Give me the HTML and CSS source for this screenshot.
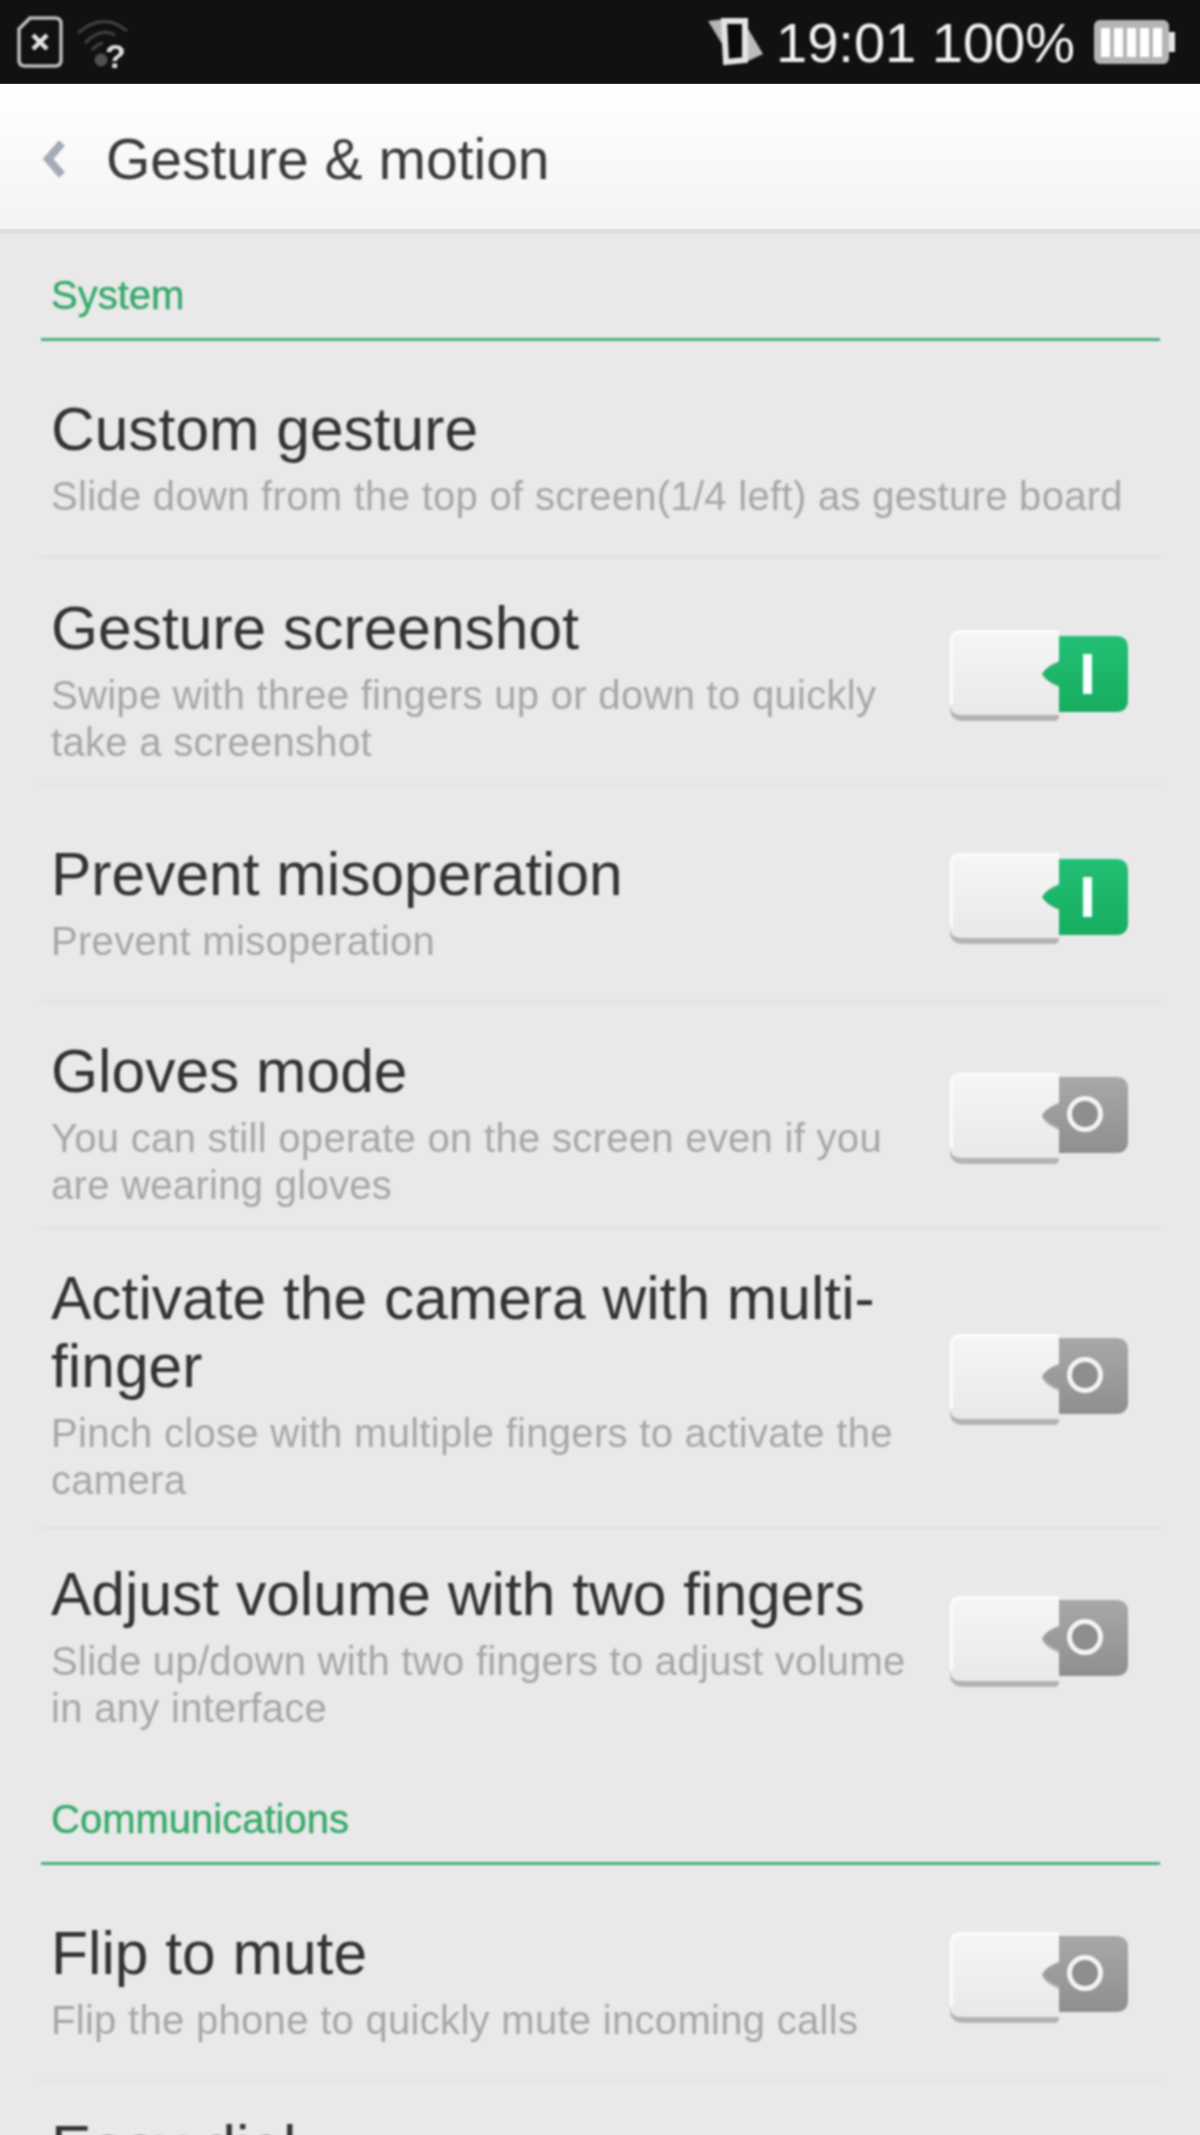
FILE: index.html
```html
<!DOCTYPE html>
<html lang="en">
<head>
<meta charset="utf-8">
<title>Gesture &amp; motion</title>
<link rel="stylesheet" href="styles.css">
</head>
<body>
<svg class="defs" width="0" height="0" aria-hidden="true">
  <defs>
    <linearGradient id="knob" x1="0" y1="0" x2="0" y2="1"><stop offset="0" stop-color="#f6f6f6"/><stop offset="1" stop-color="#e9e9e9"/></linearGradient>
    <linearGradient id="green" x1="0" y1="0" x2="0" y2="1"><stop offset="0" stop-color="#22c074"/><stop offset="1" stop-color="#17ad60"/></linearGradient>
    <linearGradient id="grey" x1="0" y1="0" x2="0" y2="1"><stop offset="0" stop-color="#a8a8a8"/><stop offset="1" stop-color="#8f8f8f"/></linearGradient>
    <symbol id="knob-shape" viewBox="0 0 180 94">
      <path d="M14 3H109V86Q109 91 104 91H14Q0 91 0 78V16Q0 3 14 3Z" fill="#b4b4b4"/>
      <path d="M12 0H109V31Q96 36 92 44Q96 52 109 57V85H12Q0 85 0 74V11Q0 0 12 0Z" fill="url(#knob)"/>
      <path d="M12 0H109V3H12Q4 3 3 11V74H0V11Q0 0 12 0Z" fill="#fbfbfb"/>
    </symbol>
    <symbol id="toggle-on" viewBox="0 0 180 94">
      <use href="#knob-shape" width="180" height="94"/>
      <path d="M109 6H166Q178 6 178 18V70Q178 82 166 82H109V56Q97 52 92 44Q97 36 109 32Z" fill="url(#green)"/>
      <rect x="133" y="24" width="9" height="40" fill="#f6fff9"/>
    </symbol>
    <symbol id="toggle-off" viewBox="0 0 180 94">
      <use href="#knob-shape" width="180" height="94"/>
      <path d="M109 4H166Q178 4 178 16V68Q178 80 166 80H109V54Q97 50 92 42Q97 34 109 30Z" fill="url(#grey)"/>
      <circle cx="135" cy="41" r="15.500" fill="#8e8e8e" stroke="#f4f4f4" stroke-width="5"/>
    </symbol>
  </defs>
</svg>
<div class="screen">
  <header class="status">
    <div class="status-group">
      <svg class="ic-sim" viewBox="0 0 46 52" aria-hidden="true">
        <path d="M13 2H38Q44 2 44 8V44Q44 50 38 50H8Q2 50 2 44V13Z" fill="none" stroke="#bdbdbd" stroke-width="3.500"/>
        <path d="M16 19L30 33M30 19L16 33" stroke="#e6e6e6" stroke-width="4.500"/>
      </svg>
      <svg class="ic-wifi" viewBox="0 0 52 50" aria-hidden="true">
        <path d="M1 14Q26 -8 50 12" fill="none" stroke="#3d3d3d" stroke-width="3.500"/>
        <path d="M8 24Q24 8 38 16" fill="none" stroke="#3d3d3d" stroke-width="3.500"/>
        <path d="M15 31Q20 25 26 24" fill="none" stroke="#3d3d3d" stroke-width="3.500"/>
        <circle cx="24" cy="41" r="6.500" fill="#4f4f4f"/>
        <text class="ic-wifi-q" x="28" y="49">?</text>
      </svg>
    </div>
    <div class="status-group">
      <svg class="ic-rotate" viewBox="0 0 57 50" aria-hidden="true">
        <path d="M0 5L17 3L19 36Z" fill="#b5b5b5"/>
        <path d="M36 6L55 38L38 46Z" fill="#bbbbbb"/>
        <path d="M16 5H37V44L18 46Z" fill="#0a0a0a" stroke="#e4e4e4" stroke-width="6"/>
      </svg>
      <span class="status-text">19:01 100%</span>
      <svg class="ic-battery" viewBox="0 0 82 46" aria-hidden="true">
        <rect x="1" y="1" width="75" height="44" rx="6" fill="#b5b5b5"/>
        <rect x="8" y="9" width="9" height="29" fill="#fff"/>
        <rect x="21" y="9" width="9" height="29" fill="#fff"/>
        <rect x="34" y="9" width="9" height="29" fill="#fff"/>
        <rect x="47" y="9" width="9" height="29" fill="#fff"/>
        <rect x="60" y="9" width="9" height="29" fill="#fff"/>
        <rect x="76" y="13" width="6" height="20" fill="#e6e6e6"/>
      </svg>
    </div>
  </header>

  <div class="titlebar">
    <svg class="ic-back" viewBox="0 0 26 40" aria-hidden="true">
      <path d="M21 4L7 20L21 36" fill="none" stroke="#a4abb5" stroke-width="8"/>
    </svg>
    <h1 class="title">Gesture &amp; motion</h1>
  </div>

  <main class="content">
    <h2 class="section">System</h2>

    <div class="row row-single">
      <div class="text">
        <div class="name">Custom gesture</div>
        <div class="desc">Slide down from the top of screen(1/4 left) as gesture board</div>
      </div>
    </div>

    <div class="row">
      <div class="text">
        <div class="name">Gesture screenshot</div>
        <div class="desc">Swipe with three fingers up or down to quickly take a screenshot</div>
      </div>
      <svg class="toggle" viewBox="0 0 180 94"><use href="#toggle-on"/></svg>
    </div>

    <div class="row row-single">
      <div class="text">
        <div class="name">Prevent misoperation</div>
        <div class="desc">Prevent misoperation</div>
      </div>
      <svg class="toggle" viewBox="0 0 180 94"><use href="#toggle-on"/></svg>
    </div>

    <div class="row row-tight">
      <div class="text">
        <div class="name">Gloves mode</div>
        <div class="desc">You can still operate on the screen even if you are wearing gloves</div>
      </div>
      <svg class="toggle" viewBox="0 0 180 94"><use href="#toggle-off"/></svg>
    </div>

    <div class="row row-tall">
      <div class="text">
        <div class="name">Activate the camera with multi-finger</div>
        <div class="desc">Pinch close with multiple fingers to activate the camera</div>
      </div>
      <svg class="toggle" viewBox="0 0 180 94"><use href="#toggle-off"/></svg>
    </div>

    <div class="row row-last">
      <div class="text">
        <div class="name">Adjust volume with two fingers</div>
        <div class="desc">Slide up/down with two fingers to adjust volume in any interface</div>
      </div>
      <svg class="toggle" viewBox="0 0 180 94"><use href="#toggle-off"/></svg>
    </div>

    <h2 class="section">Communications</h2>

    <div class="row row-single">
      <div class="text">
        <div class="name">Flip to mute</div>
        <div class="desc">Flip the phone to quickly mute incoming calls</div>
      </div>
      <svg class="toggle" viewBox="0 0 180 94"><use href="#toggle-off"/></svg>
    </div>

    <div class="row row-last">
      <div class="text">
        <div class="name">Easy dial</div>
      </div>
    </div>
  </main>
</div>
</body>
</html>
```
FILE: styles.css
```css
* { box-sizing: border-box; }
html, body { margin: 0; padding: 0; height: 2135px; overflow: hidden; background: #e9e9e9; }
body { font-family: "Liberation Sans", Arial, sans-serif; }
.defs { position: absolute; }
.screen { height: 2135px; overflow: hidden; background: #e9e9e9; }

.status {
  height: 84px; background: #111; display: flex; justify-content: space-between; align-items: center;
  padding: 0 25px 0 17px; border-bottom: 1px solid #333;
}
.status-group { display: flex; align-items: center; filter: blur(0.8px); }
.status-text { color: #f2f2f2; font-size: 56px; line-height: 84px; margin: 2px 18px 0 11px; }
.ic-sim { width: 46px; height: 52px; margin-top: 1px; }
.ic-wifi { width: 52px; height: 50px; margin: 4px 0 0 14px; }
.ic-wifi-q { font-family: "Liberation Sans", sans-serif; font-size: 34px; font-weight: 700; fill: #e0e0e0; }
.ic-rotate { width: 57px; height: 50px; margin-top: -1px; }
.ic-battery { width: 82px; height: 46px; margin-top: 1px; }

.titlebar {
  height: 150px; display: flex; align-items: center; padding: 5px 0 0 41px;
  background: linear-gradient(#ffffff, #f3f3f3); border-bottom: 5px solid #dedede;
}
.ic-back { width: 26px; height: 40px; margin-right: 39px; filter: blur(0.8px); }
.title { margin: 0; font-size: 57px; font-weight: 400; color: #3a3a3a; line-height: 68px; filter: blur(0.8px); }

.content { padding: 0 40px 0 41px; filter: blur(0.8px); }
.section {
  margin: 0; padding: 30px 0 0 10px; height: 107px; font-size: 40px; line-height: 62px; font-weight: 400;
  color: #38a96b; border-bottom: 3px solid #4bb07c; -webkit-text-stroke: 0.4px #38a96b;
}
.row {
  display: flex; align-items: center; justify-content: space-between;
  padding: 36px 30px 19px 10px; border-bottom: 2px solid #e0e0e0;
}
.row-single { min-height: 217px; }
.row-tight { padding-top: 34px; }
.row-tall { padding-top: 35px; padding-bottom: 24px; }
.row-last { padding-top: 31px; padding-bottom: 27px; border-bottom: 0; }
.text { flex: 1; min-width: 0; }
.name { font-size: 60.5px; line-height: 68px; color: #333; }
.desc { margin-top: 10px; font-size: 40px; line-height: 46.5px; letter-spacing: 0.3px; color: #a6a6a6; }
.toggle { width: 180px; height: 94px; flex: none; margin: -5px 0 0 24px; }
```
